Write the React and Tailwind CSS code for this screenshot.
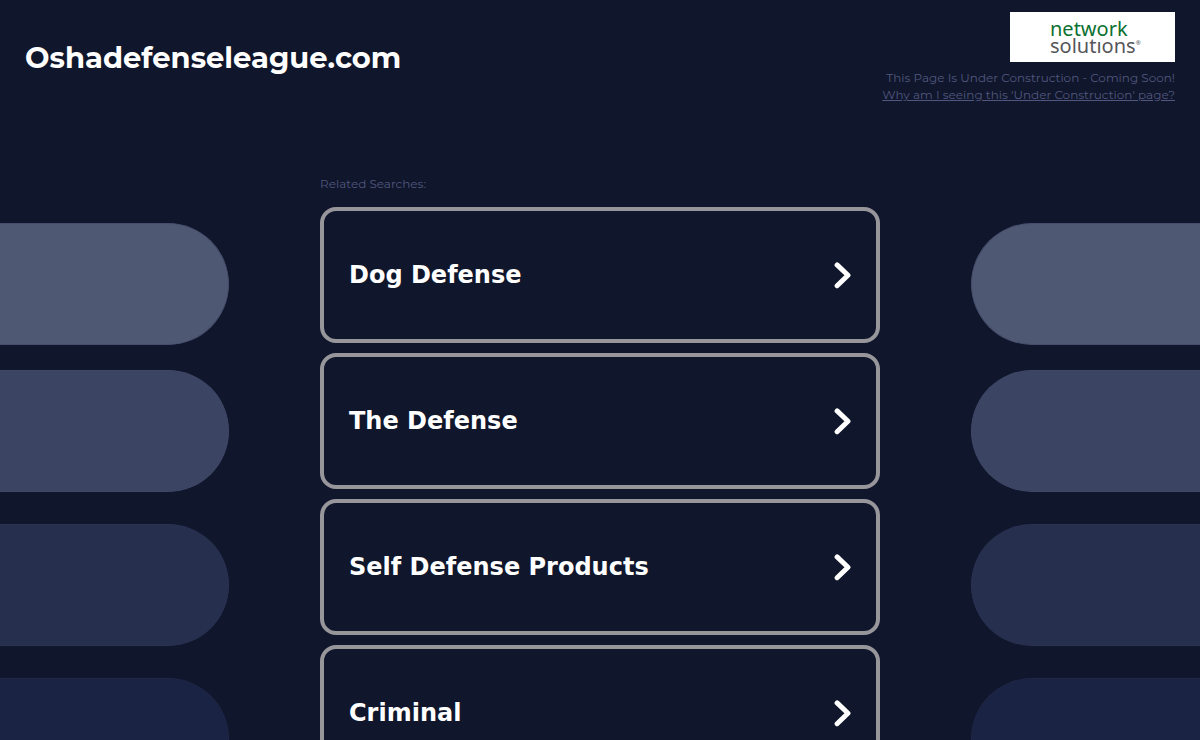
import React from "react";

const searches = ["Dog Defense", "The Defense", "Self Defense Products", "Criminal"];

function Chevron() {
  return (
    <svg className="h-7 w-5 shrink-0" viewBox="0 0 20 28" fill="none" aria-hidden="true">
      <path d="M6.1 3.9 L17 14.3 L6.1 24.7" stroke="#fff" strokeWidth="5" strokeLinecap="round" strokeLinejoin="round" />
    </svg>
  );
}

function Pills({ side }) {
  const shape = side === "left" ? "rounded-r-full border-r" : "rounded-l-full border-l";
  return (
    <div className="max-w-[229px] flex-1 pt-12" aria-hidden="true">
      <div className={`h-[122px] border-y border-[#454e6c] bg-[#4f5873] ${shape}`} />
      <div className={`mt-[25px] h-[122px] border-y border-[#3f4867] bg-[#3b4463] ${shape}`} />
      <div className={`mt-8 h-[122px] border-y border-[#2a3252] bg-[#272f4f] ${shape}`} />
      <div className={`mt-8 h-[122px] border-y border-[#1f2747] bg-[#1b2344] ${shape}`} />
    </div>
  );
}

export default function App() {
  return (
    <div className="min-h-screen bg-[#10162b] font-['Montserrat','Inter',sans-serif]">
      <header className="flex items-start justify-between px-[25px] pt-3">
        <h1 className="pt-7 text-[29px] leading-9 font-bold text-white">Oshadefenseleague.com</h1>
        <div className="flex flex-col items-end">
          <a
            href="#network-solutions"
            className="flex h-[50px] w-[165px] flex-col justify-center bg-white pl-10 font-['Noto_Sans',sans-serif] text-[20px] leading-[17px]"
          >
            <span className="text-[#0b7030]">network</span>
            <span className="flex text-[#55565a]">
              solutıons<span className="text-[6px] leading-3">®</span>
            </span>
          </a>
          <p className="mt-[7px] text-right text-[12px] leading-[17px] text-[#50567f]">
            This Page Is Under Construction - Coming Soon!
            <br />
            <a href="#why" className="underline">
              Why am I seeing this 'Under Construction' page?
            </a>
          </p>
        </div>
      </header>
      <main className="flex justify-between pt-[72px]">
        <Pills side="left" />
        <section className="w-[560px] shrink-0">
          <h2 className="text-[12px] leading-[17px] text-[#50567f]">Related Searches:</h2>
          <ul className="mt-[15px] flex flex-col gap-[10px]">
            {searches.map((label) => (
              <li key={label}>
                <a
                  href="#search"
                  className="flex h-34 items-center justify-between rounded-2xl border-4 border-[#97969b] px-[25px] font-['Verdana','DejaVu_Sans',sans-serif] text-[24px] leading-8 font-bold text-white"
                >
                  {label}
                  <Chevron />
                </a>
              </li>
            ))}
          </ul>
        </section>
        <Pills side="right" />
      </main>
    </div>
  );
}
